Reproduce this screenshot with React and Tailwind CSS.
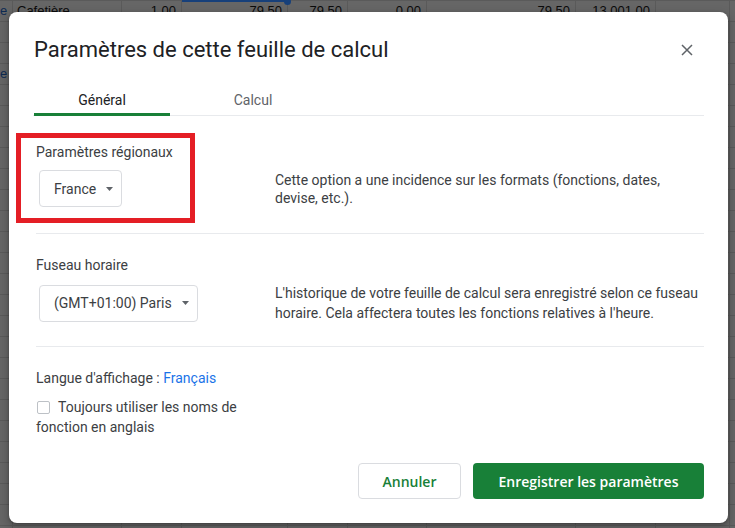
import React from "react";

const widths = [13, 109, 60, 106, 60, 79, 149, 80, 74, 20];
const aligns = ["right", "left", "right", "right", "right", "right", "right", "right", "right", "right"];
const row0 = ["e", "Cafetière", "1,00", "79,50", "79,50", "0,00", "79,50", "13 001,00", "", ""];

function SheetRow({ cells, idx }) {
  return (
    <div className="flex h-[21px] border-t border-[#5a5a5a] shrink-0">
      {widths.map((w, i) => (
        <div
          key={i}
          style={{ width: w }}
          className={
            "relative shrink-0 h-full border-r border-[#5a5a5a] text-[13px] leading-[20px] whitespace-nowrap overflow-visible " +
            (aligns[i] === "left" ? "text-left pl-[4px]" : "text-right pr-[5px]") +
            (i === 0 ? " text-[#0e2a52] pr-[7px]" : " text-[#0b0b0b]")
          }
        >
          {cells ? cells[i] : ""}
          {idx === 0 && i === 3 ? (
            <>
              <div className="absolute left-0 right-[-1px] top-[-1px] h-[2px] bg-[#17407a]" />
              <div className="absolute right-[-4px] top-[-3px] w-[7px] h-[7px] rounded-full bg-[#17407a]" />
            </>
          ) : null}
        </div>
      ))}
    </div>
  );
}

function Dropdown({ label }) {
  return (
    <div className="inline-flex items-center h-[37px] pl-[14px] pr-[8px] gap-[10px] border border-[#dadce0] rounded-[4px] text-[14px] text-[#3c4043] leading-[20px]">
      <span>{label}</span>
      <svg width="7" height="4" viewBox="0 0 7 4" className="shrink-0">
        <path d="M0 0h7L3.5 4z" fill="#5f6368" />
      </svg>
    </div>
  );
}

export default function App() {
  return (
    <div className="relative w-[735px] h-[528px] overflow-hidden bg-[#666666] font-['Liberation_Sans',Arial,sans-serif]">
      <div className="flex flex-col">
        {Array.from({ length: 26 }).map((_, r) => (
          <SheetRow
            key={r}
            idx={r}
            cells={r === 0 ? row0 : r === 3 ? ["e", "", "", "", "", "", "", "", "", ""] : null}
          />
        ))}
      </div>

      <div className="absolute left-[9px] top-[12px] w-[719px] h-[511px] bg-white rounded-[8px] shadow-[0_4px_8px_3px_rgba(0,0,0,0.15),0_1px_3px_rgba(0,0,0,0.3)] flex flex-col px-[24px] pt-[24px] pb-[24px] font-['Roboto',sans-serif] text-[#3c4043]">
        {/* Header */}
        <div className="flex items-center justify-between">
          <h1 className="ml-px text-[22px] leading-[28px] text-[#202124] font-normal">
            Paramètres de cette feuille de calcul
          </h1>
          <svg width="12" height="12" viewBox="0 0 12 12" className="mr-[11px]">
            <path d="M1 1L11 11M11 1L1 11" stroke="#5f6368" strokeWidth="1.5" />
          </svg>
        </div>

        {/* Tabs */}
        <div className="flex mt-[23px] border-b border-[#e8eaed] pl-px">
          <div className="w-[136px] h-[29px] -mb-px flex items-center justify-center border-b-[3px] border-[#188038] text-[14px] text-[#202124]">
            Général
          </div>
          <div className="w-[136px] ml-[15px] h-[29px] -mb-px flex items-center justify-center border-b-[3px] border-transparent text-[14px] text-[#5f6368]">
            Calcul
          </div>
        </div>

        {/* Body */}
        <div className="ml-[3px] flex flex-col flex-1">
          {/* Section 1 */}
          <div className="pt-[26px] pb-[26px] border-b border-[#e8eaed]">
            <div className="text-[14px] leading-[20px]">Paramètres régionaux</div>
            <div className="flex items-center mt-[8px]">
              <div className="w-[239px] shrink-0 pl-[3px]">
                <Dropdown label="France" />
              </div>
              <div className="flex-1 text-[14px] leading-[18px]">
                Cette option a une incidence sur les formats (fonctions, dates, devise, etc.).
              </div>
            </div>
          </div>

          {/* Section 2 */}
          <div className="pt-[21px] pb-[23px] border-b border-[#e8eaed]">
            <div className="text-[14px] leading-[20px]">Fuseau horaire</div>
            <div className="flex items-center mt-[8px]">
              <div className="w-[239px] shrink-0 pl-[3px]">
                <Dropdown label="(GMT+01:00) Paris" />
              </div>
              <div className="flex-1 text-[14px] leading-[20px]">
                L'historique de votre feuille de calcul sera enregistré selon ce fuseau horaire. Cela affectera toutes les fonctions relatives à l'heure.
              </div>
            </div>
          </div>

          {/* Section 3 */}
          <div className="pt-[21px]">
            <div className="text-[14px] leading-[20px]">
              Langue d'affichage : <span className="text-[#1a73e8]">Français</span>
            </div>
            <div className="mt-[9px] w-[239px] text-[14px] leading-[20px]">
              <span className="inline-block align-[-2px] w-[13px] h-[13px] ml-px mr-[8px] border border-[#bdc1c6] rounded-[2px]" />
              Toujours utiliser les noms de fonction en anglais
            </div>
          </div>

          {/* Footer */}
          <div className="mt-auto flex justify-end gap-[12px] font-['Open_Sans',sans-serif]">
            <button className="w-[103px] h-[36px] flex items-center justify-center border border-[#dadce0] rounded-[4px] bg-white text-[14px] font-semibold text-[#188038]">
              Annuler
            </button>
            <button className="w-[231px] h-[36px] flex items-center justify-center rounded-[4px] bg-[#188038] text-[14px] font-semibold text-white">
              Enregistrer les paramètres
            </button>
          </div>
        </div>

        {/* Red annotation box */}
        <div className="absolute left-[7px] top-[121px] w-[179px] h-[90px] border-[5px] border-[#e41e25] pointer-events-none" />
      </div>
    </div>
  );
}
